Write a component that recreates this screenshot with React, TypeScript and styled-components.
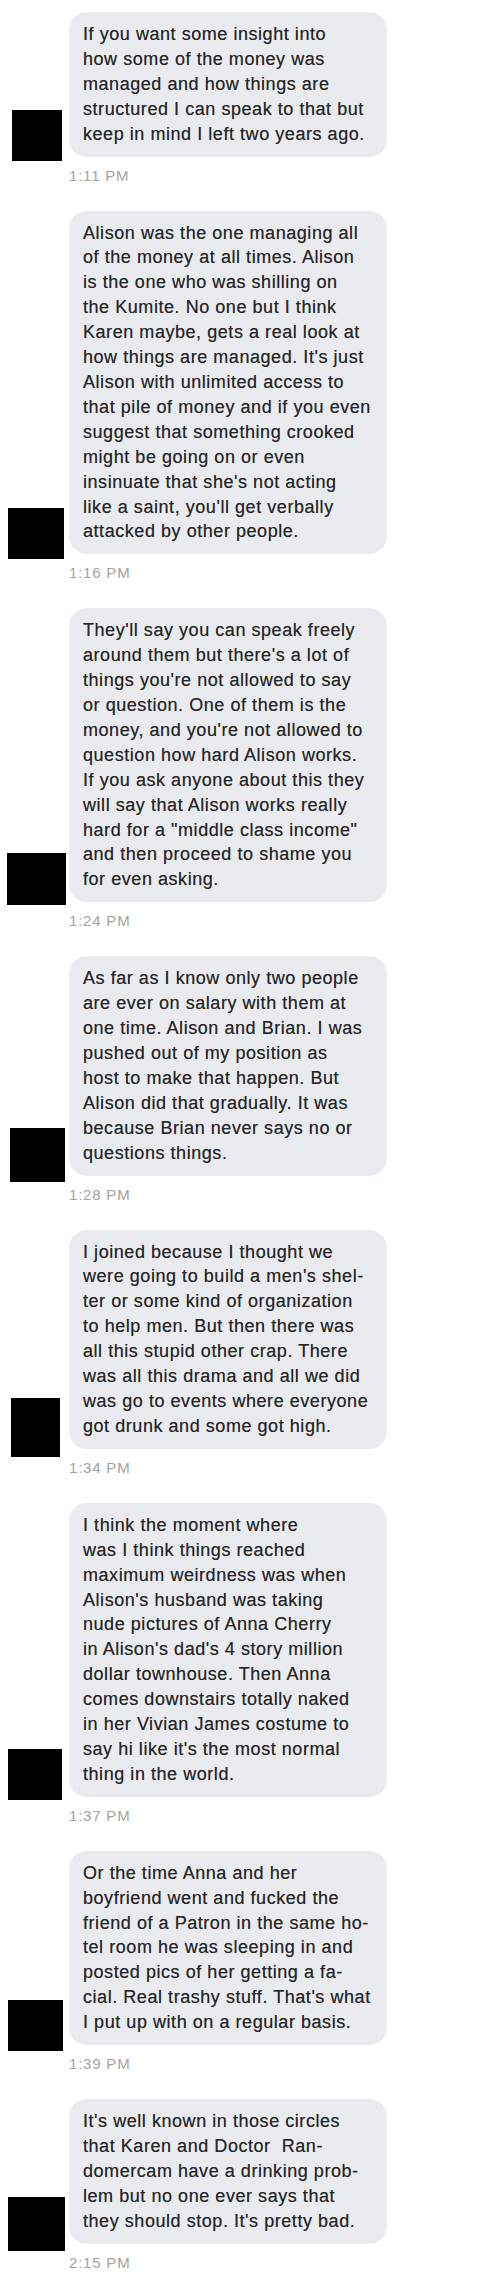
import React from 'react';
import styled, { createGlobalStyle } from 'styled-components';

interface AvatarBox {
    left: number;
    w: number;
    h: number;
    drop: number;
}

interface ChatMessage {
    lines: string[];
    time: string;
    avatar: AvatarBox;
}

const GlobalStyle = createGlobalStyle`
    body {
        margin: 0;
        background: #ffffff;
    }
`;

const Thread = styled.div`
    width: 500px;
    padding-top: 12px;
    font-family: 'Liberation Sans', Arial, sans-serif;
`;

const MessageGroup = styled.div`
    margin-bottom: 27px;
`;

const Row = styled.div`
    display: flex;
    align-items: flex-end;
`;

// redaction box over the sender picture
const Avatar = styled.div<{ $box: AvatarBox }>`
    flex-shrink: 0;
    background: #000;
    width: ${(p) => p.$box.w}px;
    height: ${(p) => p.$box.h}px;
    margin-left: ${(p) => p.$box.left}px;
    margin-right: ${(p) => 69 - p.$box.left - p.$box.w}px;
    margin-bottom: ${(p) => -p.$box.drop}px;
`;

const Bubble = styled.div`
    width: 318px;
    box-sizing: border-box;
    padding: 10px 14px;
    background: #e9ebef;
    border-radius: 18px;
    color: #262626;
    font-size: 18px;
    letter-spacing: 0.55px;
    line-height: 24.9px;
    white-space: pre;
    text-shadow: 0 0 0.4px rgba(0, 0, 0, 0.5);
`;

const Time = styled.div`
    margin: 11px 0 0 69px;
    font-size: 15px;
    line-height: 16px;
    letter-spacing: 0.8px;
    color: #a2a2a2;
`;

const messages: ChatMessage[] = [
    {
        lines: [
            'If you want some insight into',
            'how some of the money was',
            'managed and how things are',
            'structured I can speak to that but',
            'keep in mind I left two years ago.',
        ],
        time: '1:11 PM',
        avatar: { left: 12, w: 50, h: 51, drop: 4 },
    },
    {
        lines: [
            'Alison was the one managing all',
            'of the money at all times. Alison',
            'is the one who was shilling on',
            'the Kumite. No one but I think',
            'Karen maybe, gets a real look at',
            "how things are managed. It's just",
            'Alison with unlimited access to',
            'that pile of money and if you even',
            'suggest that something crooked',
            'might be going on or even',
            "insinuate that she's not acting",
            "like a saint, you'll get verbally",
            'attacked by other people.',
        ],
        time: '1:16 PM',
        avatar: { left: 8, w: 56, h: 51, drop: 5 },
    },
    {
        lines: [
            "They'll say you can speak freely",
            "around them but there's a lot of",
            "things you're not allowed to say",
            'or question. One of them is the',
            "money, and you're not allowed to",
            'question how hard Alison works.',
            'If you ask anyone about this they',
            'will say that Alison works really',
            'hard for a "middle class income"',
            'and then proceed to shame you',
            'for even asking.',
        ],
        time: '1:24 PM',
        avatar: { left: 7, w: 59, h: 52, drop: 3 },
    },
    {
        lines: [
            'As far as I know only two people',
            'are ever on salary with them at',
            'one time. Alison and Brian. I was',
            'pushed out of my position as',
            'host to make that happen. But',
            'Alison did that gradually. It was',
            'because Brian never says no or',
            'questions things.',
        ],
        time: '1:28 PM',
        avatar: { left: 10, w: 55, h: 54, drop: 6 },
    },
    {
        lines: [
            'I joined because I thought we',
            "were going to build a men's shel-",
            'ter or some kind of organization',
            'to help men. But then there was',
            'all this stupid other crap. There',
            'was all this drama and all we did',
            'was go to events where everyone',
            'got drunk and some got high.',
        ],
        time: '1:34 PM',
        avatar: { left: 11, w: 49, h: 59, drop: 8 },
    },
    {
        lines: [
            'I think the moment where',
            'was I think things reached',
            'maximum weirdness was when',
            "Alison's husband was taking",
            'nude pictures of Anna Cherry',
            "in Alison's dad's 4 story million",
            'dollar townhouse. Then Anna',
            'comes downstairs totally naked',
            'in her Vivian James costume to',
            "say hi like it's the most normal",
            'thing in the world.',
        ],
        time: '1:37 PM',
        avatar: { left: 8, w: 54, h: 51, drop: 3 },
    },
    {
        lines: [
            'Or the time Anna and her',
            'boyfriend went and fucked the',
            'friend of a Patron in the same ho-',
            'tel room he was sleeping in and',
            'posted pics of her getting a fa-',
            "cial. Real trashy stuff. That's what",
            'I put up with on a regular basis.',
        ],
        time: '1:39 PM',
        avatar: { left: 8, w: 55, h: 51, drop: 6 },
    },
    {
        lines: [
            "It's well known in those circles",
            'that Karen and Doctor  Ran-',
            'domercam have a drinking prob-',
            'lem but no one ever says that',
            "they should stop. It's pretty bad.",
        ],
        time: '2:15 PM',
        avatar: { left: 8, w: 57, h: 54, drop: 7 },
    },
];

function App() {
    return (
        <>
            <GlobalStyle />
            <Thread>
                {messages.map((m) => (
                    <MessageGroup key={m.time}>
                        <Row>
                            <Avatar $box={m.avatar} />
                            <Bubble>{m.lines.join('\n')}</Bubble>
                        </Row>
                        <Time>{m.time}</Time>
                    </MessageGroup>
                ))}
            </Thread>
        </>
    );
}

export default App;
